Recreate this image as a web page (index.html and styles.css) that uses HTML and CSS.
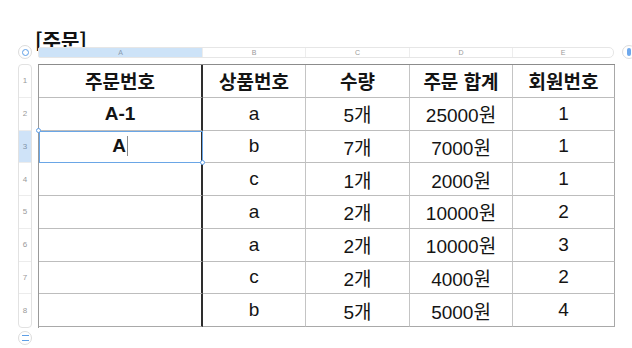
FILE: index.html
```html
<!DOCTYPE html>
<html lang="ko">
<head>
<meta charset="utf-8">
<link rel="stylesheet" href="styles.css">
</head>
<body>
<div class="sheet">
  <div class="title">[주문]</div>
  <div class="colbar">
    <span class="handle handle-ring"><span class="ring"></span></span>
    <div class="colheads">
      <div class="colhead sel">A</div>
      <div class="colhead">B</div>
      <div class="colhead">C</div>
      <div class="colhead">D</div>
      <div class="colhead">E</div>
    </div>
    <span class="handle handle-pill"><span class="pill"></span></span>
  </div>
  <div class="body">
    <div class="rownums">
      <div class="rn">1</div>
      <div class="rn">2</div>
      <div class="rn sel">3</div>
      <div class="rn">4</div>
      <div class="rn">5</div>
      <div class="rn">6</div>
      <div class="rn">7</div>
      <div class="rn">8</div>
    </div>
    <div class="grid">
      <div class="c ca b">주문번호</div><div class="c b">상품번호</div><div class="c b">수량</div><div class="c b">주문 합계</div><div class="c ce b">회원번호</div>
      <div class="c ca b">A-1</div><div class="c">a</div><div class="c">5개</div><div class="c">25000원</div><div class="c ce">1</div>
      <div class="c ca b active">A<span class="caret"></span><span class="knob knob-tl"></span><span class="knob knob-br"></span></div><div class="c">b</div><div class="c">7개</div><div class="c">7000원</div><div class="c ce">1</div>
      <div class="c ca"></div><div class="c">c</div><div class="c">1개</div><div class="c">2000원</div><div class="c ce">1</div>
      <div class="c ca"></div><div class="c">a</div><div class="c">2개</div><div class="c">10000원</div><div class="c ce">2</div>
      <div class="c ca"></div><div class="c">a</div><div class="c">2개</div><div class="c">10000원</div><div class="c ce">3</div>
      <div class="c ca"></div><div class="c">c</div><div class="c">2개</div><div class="c">4000원</div><div class="c ce">2</div>
      <div class="c ca last"></div><div class="c last">b</div><div class="c last">5개</div><div class="c last">5000원</div><div class="c ce last">4</div>
    </div>
  </div>
  <div class="footer">
    <span class="handle handle-eq"><span class="eq"></span></span>
  </div>
</div>
</body>
</html>
```

FILE: styles.css
```css
html, body {
  margin: 0;
  padding: 0;
  background: #ffffff;
  width: 632px;
  height: 348px;
  overflow: hidden;
}

.sheet {
  padding-left: 18px;
  font-family: "Liberation Sans", "Noto Sans CJK KR", sans-serif;
  color: #111;
}

.title {
  margin-top: 31px;
  margin-left: 17px;
  height: 14px;
  line-height: 20px;
  font-size: 20px;
  font-weight: 700;
  font-family: "Noto Sans CJK KR", sans-serif;
  color: #111;
}

.colbar {
  position: relative;
  z-index: 1;
  display: flex;
  align-items: center;
  height: 14px;
  width: 620px;
}

.handle {
  flex: none;
  width: 14px;
  height: 14px;
  box-sizing: border-box;
  border: 1px solid #dcdcdc;
  border-radius: 50%;
  background: #fff;
  display: flex;
  align-items: center;
  justify-content: center;
}

.ring {
  width: 7px;
  height: 7px;
  box-sizing: border-box;
  border: 1.3px solid #5f9fe6;
  border-radius: 50%;
}

.handle-pill {
  margin-left: 8px;
}

.pill {
  width: 4px;
  height: 8px;
  border-radius: 2px;
  background: #6ea8ec;
}

.colheads {
  margin-left: 6px;
  width: 576px;
  height: 11px;
  box-sizing: border-box;
  display: grid;
  grid-template-columns: 164px 103px 104px 103px 1fr;
  border: 1px solid #e6e6e6;
  border-radius: 2px 5px 5px 2px;
  background: #fff;
}

.colhead {
  font-size: 7px;
  line-height: 9px;
  text-align: center;
  color: #9a9a9a;
  border-right: 1px solid #ededed;
}

.colhead:last-child {
  border-right: none;
}

.colhead.sel {
  background: #cde3f8;
  color: #8a9bb0;
}

.body {
  margin-top: 5px;
  display: flex;
  gap: 6px;
}

.rownums {
  width: 14px;
  box-sizing: border-box;
  border: 1px solid #e2e2e2;
  border-radius: 4px;
  display: grid;
  grid-template-rows: repeat(8, 32.75px);
  overflow: hidden;
}

.rn {
  font-size: 8px;
  color: #9a9a9a;
  display: flex;
  align-items: center;
  justify-content: center;
  border-bottom: 1px solid #ececec;
}

.rn:last-child {
  border-bottom: none;
}

.rn.sel {
  background: #cfe3f8;
  color: #7f93aa;
}

.grid {
  display: grid;
  grid-template-columns: 164px 103px 104px 103px 102px;
  grid-auto-rows: 32.75px;
  border-top: 1px solid #8c8c8c;
  border-left: 1px solid #9a9a9a;
  width: 577px;
  box-sizing: border-box;
}

.c {
  position: relative;
  display: flex;
  align-items: center;
  justify-content: center;
  font-size: 19px;
  border-right: 1px solid #c4c4c4;
  border-bottom: 1px solid #bdbdbd;
  box-sizing: border-box;
  color: #141414;
}

.c.ca {
  border-right: 2px solid #2e2e2e;
}

.c.ce {
  border-right: 1px solid #a8a8a8;
}

.c.last {
  border-bottom: 1px solid #a9a9a9;
}

.c.b {
  font-weight: 700;
}

.active {
  outline: 1.5px solid #6aa6e6;
  outline-offset: -1px;
  z-index: 2;
}

.caret {
  display: inline-block;
  width: 1px;
  height: 20px;
  margin-left: 1px;
  background: #8a8a8a;
}

.knob {
  position: absolute;
  width: 5px;
  height: 5px;
  box-sizing: border-box;
  border: 1px solid #5f9fe6;
  border-radius: 50%;
  background: #fff;
}

.knob-tl {
  left: -3px;
  top: -3px;
}

.knob-br {
  right: -4px;
  bottom: -3px;
}

.footer {
  margin-top: 3px;
  display: flex;
}

.eq {
  width: 7px;
  height: 4px;
  border-top: 1.3px solid #5f9fe6;
  border-bottom: 1.3px solid #5f9fe6;
}
```
